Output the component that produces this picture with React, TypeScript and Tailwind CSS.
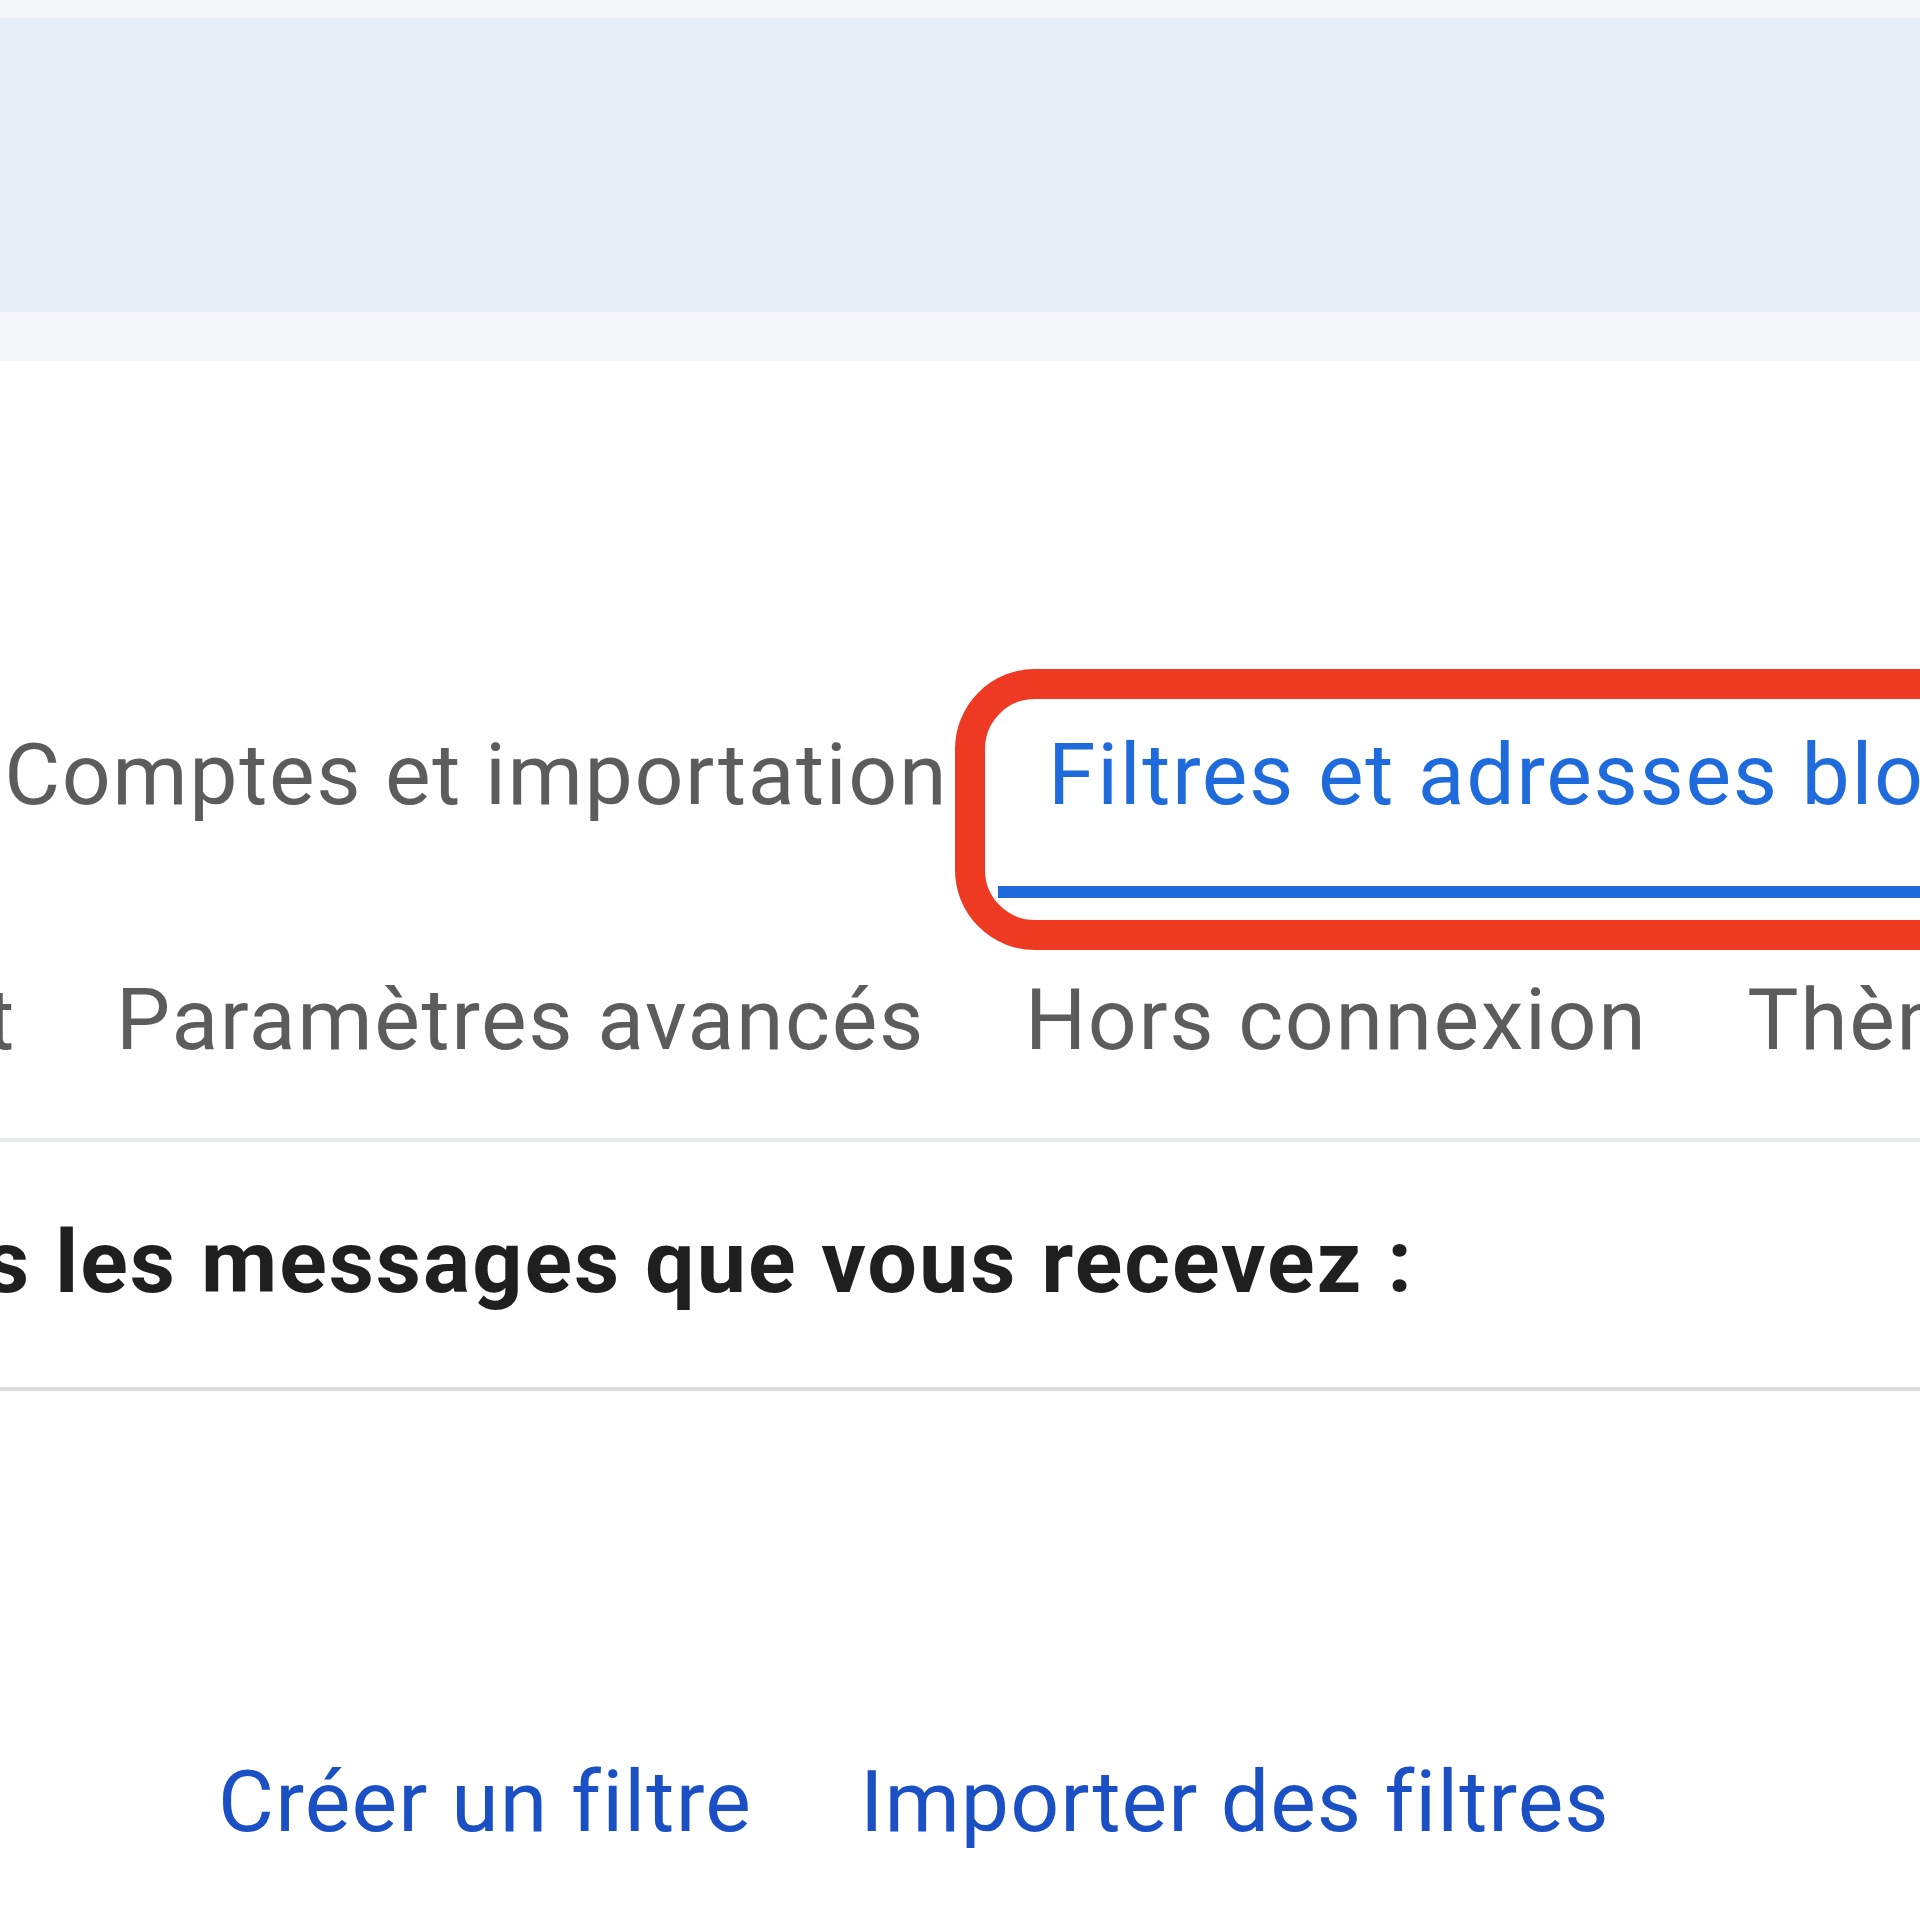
type Tab = {
  label: string;
  active?: boolean;
};

const rowTwo: Tab[] = [
  { label: "Paramètres avancés" },
  { label: "Hors connexion" },
  { label: "Thèmes" },
];

function TabItem({ label, active }: Tab) {
  return (
    <div className="relative flex shrink-0 flex-col">
      <span
        className={
          active
            ? "whitespace-nowrap px-[50px] text-[86px] leading-[100px] tracking-[1.6px] text-[#1f6bdc]"
            : "whitespace-nowrap px-[50px] text-[86px] leading-[100px] tracking-[1.6px] text-[#5c5c5c]"
        }
      >
        {label}
      </span>
      {active && (
        <>
          <div className="mt-[61px] h-[12px] w-full bg-[#1f6bdc]" />
          {/* annotation drawn over the screenshot */}
          <div className="pointer-events-none absolute -left-[43px] -top-[56px] -bottom-[52px] -right-[200px] rounded-[80px] border-[30px] border-[#ee3a22]" />
        </>
      )}
    </div>
  );
}

export default function App() {
  return (
    <div
      className="h-[1920px] w-full overflow-hidden bg-white"
      style={{ fontFamily: "Roboto, 'Noto Sans', sans-serif" }}
    >
      <div className="h-[18px] bg-[#f6f7fb]" />
      <div className="h-[294px] bg-[#e8eef8]" />
      <div className="h-[49px] bg-[#f6f7fb]" />

      {/* tabs, first row */}
      <div className="mt-[364px] flex items-start">
        <div className="flex w-[998px] shrink-0 justify-end overflow-hidden">
          <TabItem label="Comptes et importation" />
        </div>
        <TabItem label="Filtres et adresses bloquées" active />
      </div>

      {/* tabs, second row */}
      <div className="mt-[72px] flex items-start">
        <div className="flex w-[66px] shrink-0 justify-end overflow-hidden">
          <TabItem label="Chat et Meet" />
        </div>
        {rowTwo.map((tab) => (
          <TabItem key={tab.label} {...tab} />
        ))}
      </div>

      <div className="mt-[68px] h-[4px] bg-[#e8eaed]" />

      <div className="mt-[70px] flex">
        <div className="flex w-[1414px] shrink-0 justify-end overflow-hidden">
          <span className="whitespace-nowrap text-[88px] font-bold leading-[100px] tracking-[2px] text-[#1f1f1f]">
            Les filtres suivants sont appliqués à tous les messages que vous recevez :
          </span>
        </div>
      </div>

      <div className="mt-[75px] h-[4px] bg-[#dcdcdc]" />

      <div className="mt-[361px] flex gap-[108px] pl-[218px]">
        <span className="whitespace-nowrap text-[86px] leading-[100px] tracking-[1.2px] text-[#1b50c5]">
          Créer un filtre
        </span>
        <span className="whitespace-nowrap text-[86px] leading-[100px] tracking-[1px] text-[#1b50c5]">
          Importer des filtres
        </span>
      </div>
    </div>
  );
}
